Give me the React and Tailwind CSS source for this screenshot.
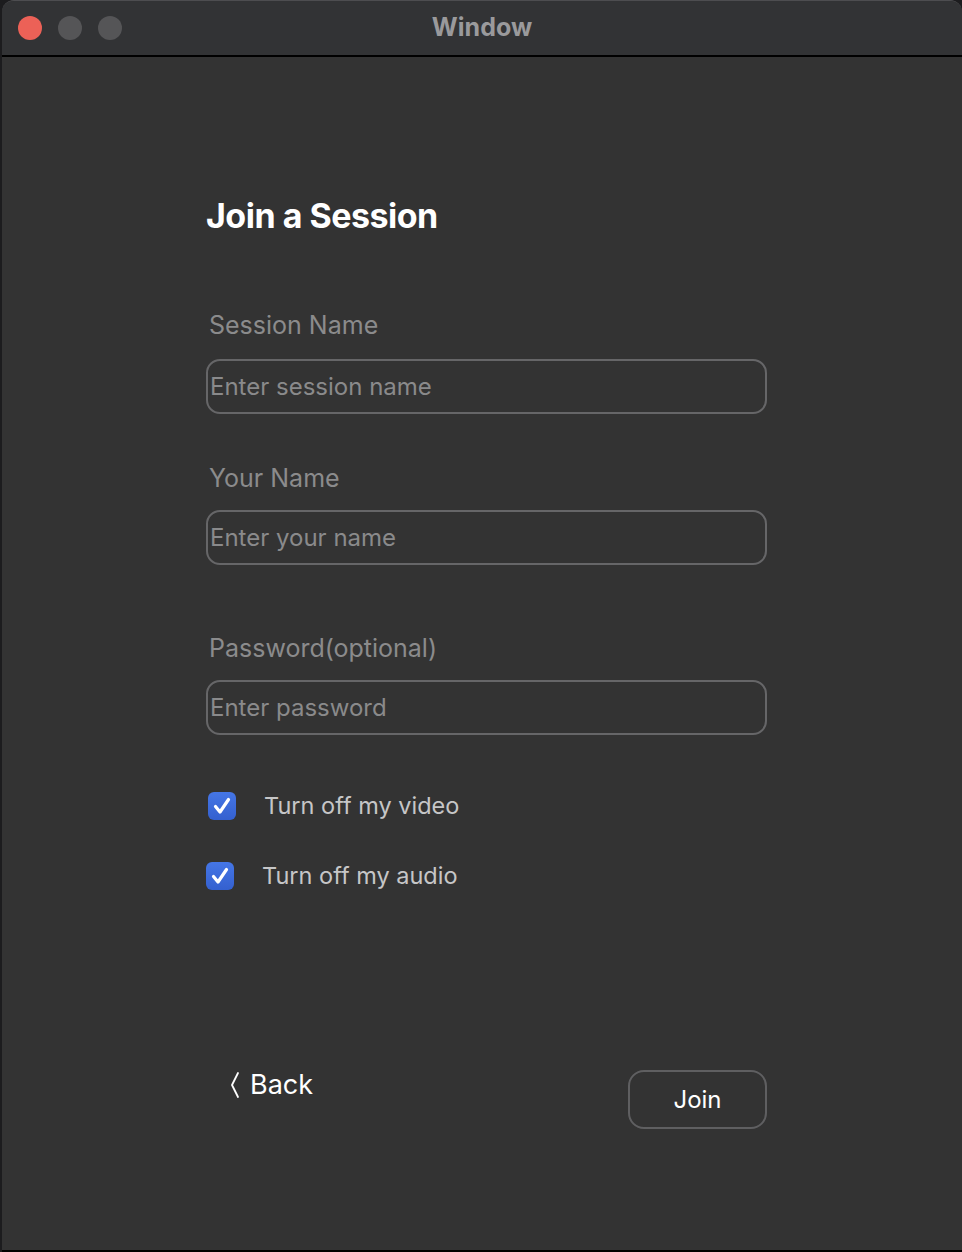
const Field = ({ label, placeholder, labelGap, topGap }) => (
  <div className={topGap}>
    <p className="ml-[3px] text-[25px] leading-[30px] text-[#8b8b8c]">{label}</p>
    <div className={`${labelGap} flex h-[55px] w-[561px] items-center rounded-[14px] border-2 border-[#666668] px-[2px]`}>
      <span className="text-[24px] leading-[30px] text-[#8a8a8b]">{placeholder}</span>
    </div>
  </div>
)

const Check = ({ label, shift }) => (
  <div className={`flex items-center ${shift}`}>
    <span className="flex h-[28px] w-[28px] items-center justify-center rounded-[6px] bg-gradient-to-b from-[#4576e6] to-[#3460cf]">
      <svg width="22" height="22" viewBox="0 0 22 22" fill="none">
        <path d="M4.5 11.5 L9 17 L17.5 4.5" stroke="white" strokeWidth="3.2" strokeLinecap="round" strokeLinejoin="round" />
      </svg>
    </span>
    <span className="ml-[28px] text-[23.5px] leading-[30px] text-[#c6c6c7]">{label}</span>
  </div>
)

export default function App() {
  return (
    <div className="flex min-h-[1252px] flex-col bg-[#1c1c1e] pl-[2px] font-['Inter',sans-serif]">
      <div className="flex flex-1 flex-col overflow-hidden rounded-t-[12px] border-t border-[#4d4d50] bg-[#333333]">
        <div className="grid h-[56px] grid-cols-[1fr_auto_1fr] items-center border-b-2 border-black bg-[#323335]">
          <div className="flex items-center gap-[16px] pl-[16px]">
            <span className="h-[24px] w-[24px] rounded-full bg-[#ec6157]" />
            <span className="h-[24px] w-[24px] rounded-full bg-[#555557]" />
            <span className="h-[24px] w-[24px] rounded-full bg-[#555557]" />
          </div>
          <span className="-mt-[2px] text-[25px] font-bold leading-[30px] text-[#9a9a9c]">Window</span>
          <div />
        </div>

        <div className="flex flex-1 flex-col pl-[204px]">
          <h1 className="mt-[139px] text-[34px] font-bold leading-[40px] tracking-[-0.5px] text-white">Join a Session</h1>

          <Field label="Session Name" placeholder="Enter session name" topGap="mt-[74px]" labelGap="mt-[19px]" />
          <Field label="Your Name" placeholder="Enter your name" topGap="mt-[49px]" labelGap="mt-[17px]" />
          <Field label="Password(optional)" placeholder="Enter password" topGap="mt-[68px]" labelGap="mt-[17px]" />

          <div className="mt-[56px] flex flex-col gap-[40px]">
            <Check label="Turn off my video" shift="ml-[2px]" />
            <Check label="Turn off my audio" shift="" />
          </div>

          <div className="mt-[179px] flex w-[561px] items-start justify-between">
            <div className="ml-[24px] -mt-[2px] flex items-center gap-[10px] text-white">
              <svg width="10" height="28" viewBox="0 0 10 28" fill="none">
                <path d="M8 2 L2 14 L8 26" stroke="white" strokeWidth="1.8" strokeLinecap="round" strokeLinejoin="round" />
              </svg>
              <span className="text-[27px] leading-[34px]">Back</span>
            </div>
            <button className="flex h-[59px] w-[139px] items-center justify-center rounded-[16px] border-2 border-[#5f5f61] text-[24px] leading-[30px] text-white">
              Join
            </button>
          </div>
        </div>
        <div className="h-[2px] bg-black" />
      </div>
    </div>
  )
}
